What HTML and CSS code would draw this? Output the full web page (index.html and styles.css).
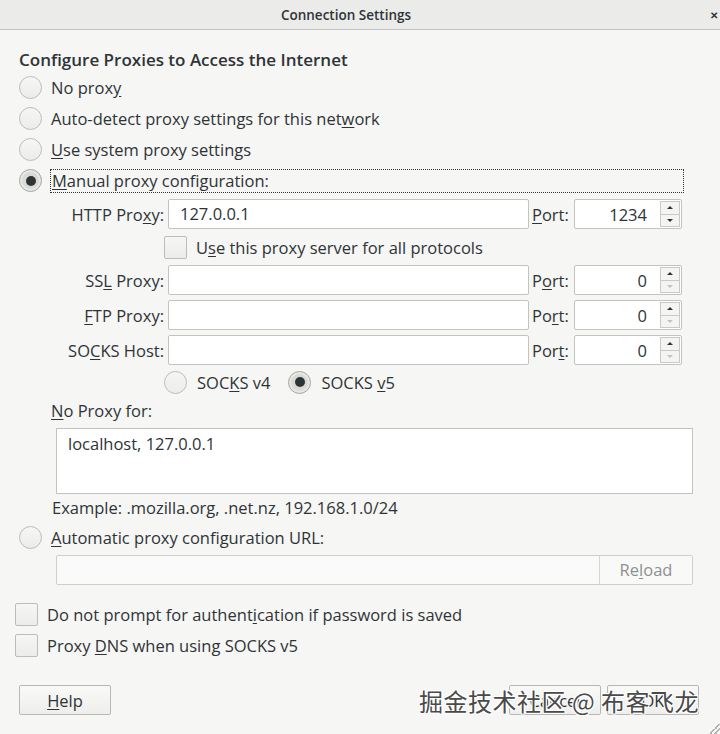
FILE: index.html
```html
<!DOCTYPE html>
<html lang="en">
<head>
    <meta charset="UTF-8">
    <title>Connection Settings</title>
    <link rel="stylesheet" href="styles.css">
</head>
<body>
    <div class="dialog">
        <header class="titlebar">
            <span class="title">Connection Settings</span>
            <span class="close">&#x2715;</span>
        </header>

        <main class="content">
            <h1 class="heading">Configure Proxies to Access the Internet</h1>

            <div class="radio-row"><span class="radio"></span><span>No prox<u>y</u></span></div>
            <div class="radio-row"><span class="radio"></span><span>Auto-detect proxy settings for this net<u>w</u>ork</span></div>
            <div class="radio-row"><span class="radio"></span><span><u>U</u>se system proxy settings</span></div>
            <div class="radio-row"><span class="radio checked"></span><span class="focus-ring"><u>M</u>anual proxy configuration:</span></div>

            <div class="proxy-grid">
                <span class="field-label">HTTP Pro<u>x</u>y:</span>
                <div class="entry">127.0.0.1</div>
                <span class="port-label"><u>P</u>ort:</span>
                <div class="spin"><span class="spin-value">1234</span><span class="spin-buttons"><span class="arrow up"></span><span class="arrow down"></span></span></div>

                <div class="check-row span-all"><span class="checkbox"></span><span>U<u>s</u>e this proxy server for all protocols</span></div>

                <span class="field-label">SS<u>L</u> Proxy:</span>
                <div class="entry"></div>
                <span class="port-label">P<u>o</u>rt:</span>
                <div class="spin"><span class="spin-value">0</span><span class="spin-buttons"><span class="arrow up"></span><span class="arrow down dim"></span></span></div>

                <span class="field-label"><u>F</u>TP Proxy:</span>
                <div class="entry"></div>
                <span class="port-label">Po<u>r</u>t:</span>
                <div class="spin"><span class="spin-value">0</span><span class="spin-buttons"><span class="arrow up"></span><span class="arrow down dim"></span></span></div>

                <span class="field-label">SO<u>C</u>KS Host:</span>
                <div class="entry"></div>
                <span class="port-label">Por<u>t</u>:</span>
                <div class="spin"><span class="spin-value">0</span><span class="spin-buttons"><span class="arrow up"></span><span class="arrow down dim"></span></span></div>

                <div class="socks-row span-all">
                    <span class="radio"></span><span>SOC<u>K</u>S v4</span>
                    <span class="radio checked"></span><span>SOCKS <u>v</u>5</span>
                </div>
            </div>

            <div class="noproxy-label"><u>N</u>o Proxy for:</div>
            <div class="textarea">localhost, 127.0.0.1</div>
            <div class="example">Example: .mozilla.org, .net.nz, 192.168.1.0/24</div>

            <div class="radio-row auto"><span class="radio"></span><span><u>A</u>utomatic proxy configuration URL:</span></div>
            <div class="url-row">
                <div class="url-entry"></div>
                <div class="reload">Re<u>l</u>oad</div>
            </div>

            <div class="options">
                <div class="check-row option"><span class="checkbox"></span><span>Do not prompt for authent<u>i</u>cation if password is saved</span></div>
                <div class="check-row option"><span class="checkbox"></span><span>Proxy <u>D</u>NS when using SOCKS v5</span></div>
            </div>

            <div class="button-row">
                <button class="btn"><u>H</u>elp</button>
                <div class="actions">
                    <button class="btn">Cancel</button>
                    <button class="btn">OK</button>
                </div>
                <span class="watermark">掘金技术社区 @ 布客飞龙</span>
            </div>
        </main>
        <span class="grip"></span>
    </div>
</body>
</html>
```

FILE: styles.css
```css
* {
    margin: 0;
    padding: 0;
    box-sizing: border-box;
}

body {
    font-family: "Open Sans", "Noto Sans", sans-serif;
    font-size: 16.5px;
    color: #2e3436;
    background: #f6f6f5;
}

.dialog {
    width: 720px;
    height: 734px;
    position: relative;
    overflow: hidden;
    background: #f6f6f5;
}

u {
    text-decoration: underline;
    text-underline-offset: 2px;
}

.titlebar {
    height: 30px;
    padding-right: 28px;
    background: #ebebea;
    border-bottom: 1px solid #c4c4c2;
    display: flex;
    align-items: center;
    justify-content: center;
    position: relative;
}

.title {
    font-size: 13.5px;
    font-weight: 600;
    color: #2e3436;
}

.close {
    position: absolute;
    right: 2px;
    top: 8px;
    font-size: 10px;
    font-weight: 700;
    color: #2e3436;
}

.content {
    padding: 17px 0 0 19px;
}

.heading {
    font-size: 17px;
    font-weight: 600;
    line-height: 25px;
    height: 25px;
}

.radio-row {
    display: flex;
    align-items: center;
    height: 31px;
    gap: 9px;
}

.radio {
    width: 23px;
    height: 23px;
    border-radius: 50%;
    border: 1px solid #bcbcb9;
    background: linear-gradient(#f6f6f5, #ececea);
    flex-shrink: 0;
    display: flex;
    align-items: center;
    justify-content: center;
}

.radio.checked {
    background: #d9d9d7;
    border-color: #a9a9a6;
    box-shadow: inset 0 0 0 2px #e8e8e6;
}

.radio.checked::after {
    content: "";
    width: 10px;
    height: 10px;
    border-radius: 50%;
    background: #2e3436;
}

.focus-ring {
    flex: 1;
    margin-right: 36px;
    margin-left: -1px;
    padding-left: 1px;
    border: 1px dotted #2e3436;
    line-height: 22px;
}

.proxy-grid {
    margin: 3px 0 0 37px;
    display: grid;
    grid-template-columns: 108px 361px 37px 108px;
    grid-template-rows: 30px 26px 30px 30px 30px 24px;
    column-gap: 4px;
    row-gap: 5px;
    align-items: center;
}

.field-label,
.port-label {
    white-space: nowrap;
}

.field-label {
    text-align: right;
}

.port-label {
    margin-left: -1px;
}

.entry {
    height: 30px;
    background: #fff;
    border: 1px solid #c3c3c0;
    border-radius: 2px;
    padding: 0 11px;
    line-height: 28px;
}

.spin {
    height: 30px;
    background: #fff;
    border: 1px solid #c3c3c0;
    border-radius: 2px;
    display: flex;
    align-items: center;
}

.spin-value {
    flex: 1;
    text-align: right;
    padding-right: 13px;
}

.spin-buttons {
    width: 20px;
    height: 26px;
    margin-right: 1px;
    border: 1px solid #c9c9c6;
    background: #f4f4f3;
    display: flex;
    flex-direction: column;
}

.arrow {
    flex: 1;
    display: flex;
    align-items: center;
    justify-content: center;
}

.arrow.down {
    border-top: 1px solid #c9c9c6;
}

.arrow::after {
    content: "";
    border-left: 3px solid transparent;
    border-right: 3px solid transparent;
}

.arrow.up::after {
    border-bottom: 3px solid #2e3436;
}

.arrow.down::after {
    border-top: 3px solid #2e3436;
}

.arrow.dim::after {
    border-top-color: #c3c3c0;
}

.span-all {
    grid-column: 2 / 5;
}

.check-row {
    display: flex;
    align-items: center;
    gap: 9px;
}

.proxy-grid .check-row {
    margin-left: -4px;
}

.checkbox {
    width: 23px;
    height: 23px;
    border: 1px solid #bcbcb9;
    border-radius: 2px;
    background: linear-gradient(#f6f6f5, #ececea);
    flex-shrink: 0;
}

.socks-row {
    display: flex;
    align-items: center;
    margin-left: -4px;
    gap: 10px;
}

.socks-row .radio + span {
    margin-right: 8px;
}

.noproxy-label {
    margin: 5px 0 0 32px;
    line-height: 24px;
}

.textarea {
    margin: 5px 27px 0 37px;
    height: 66px;
    background: #fff;
    border: 1px solid #c3c3c0;
    padding: 3px 11px;
    line-height: 24px;
}

.example {
    margin: 2px 0 0 33px;
    line-height: 24px;
}

.radio-row.auto {
    height: 32px;
    margin-top: 1px;
}

.url-row {
    margin: 2px 27px 0 37px;
    height: 30px;
    display: flex;
    border: 1px solid #cfcfcc;
    border-radius: 2px;
    background: #fafafa;
}

.url-entry {
    flex: 1;
}

.reload {
    width: 93px;
    border-left: 1px solid #d6d6d3;
    color: #8d9091;
    text-align: center;
    line-height: 28px;
    background: #f9f9f8;
}

.options {
    margin: 14px 0 0 -4px;
}

.check-row.option {
    height: 31px;
}

.button-row {
    margin: 24px 21px 0 0;
    display: flex;
    justify-content: space-between;
    position: relative;
}

.actions {
    display: flex;
    gap: 6px;
}

.btn {
    width: 92px;
    height: 30px;
    font-family: inherit;
    font-size: 16.5px;
    color: #2e3436;
    border: 1px solid #b8b8b5;
    border-radius: 2px;
    background: linear-gradient(#f9f9f8, #eeeeec);
}

.watermark {
    position: absolute;
    right: 0;
    top: 1px;
    font-family: "Noto Sans CJK SC", sans-serif;
    font-size: 24px;
    line-height: 30px;
    color: #4a4a4a;
    text-shadow: 1px 1px 0 #fff, -1px -1px 0 #fff, 1px -1px 0 #fff, -1px 1px 0 #fff;
    letter-spacing: 0.5px;
}

.grip {
    position: absolute;
    right: 0;
    bottom: 0;
    width: 10px;
    height: 10px;
    background: linear-gradient(135deg, transparent 45%, #b0b0ad 45%, #b0b0ad 55%, transparent 55%, transparent 70%, #b0b0ad 70%, #b0b0ad 80%, transparent 80%);
}
```
